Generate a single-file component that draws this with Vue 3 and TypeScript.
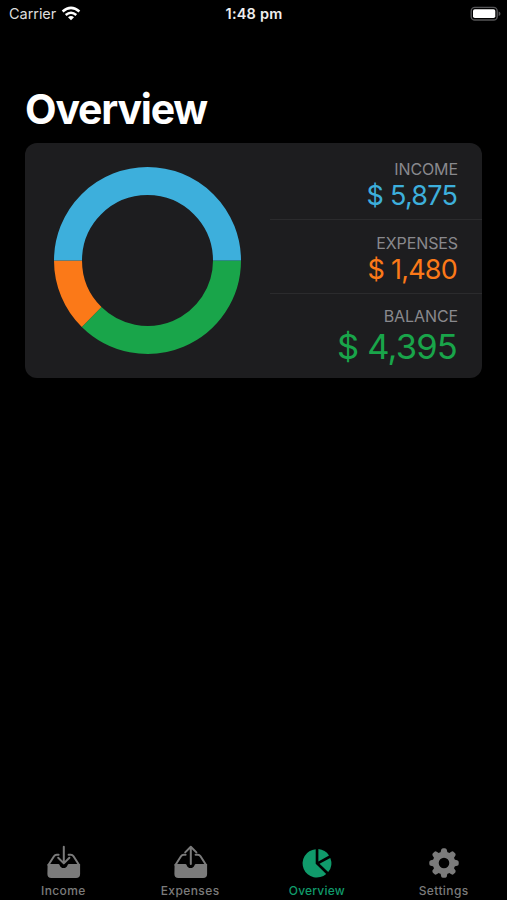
<script setup lang="ts">
import { computed, ref } from 'vue'

type TabId = 'income' | 'expenses' | 'overview' | 'settings'

interface Tab {
  id: TabId
  label: string
}

const income = 5875
const expenses = 1480
const balance = income - expenses

const rows = [
  { id: 'income', label: 'INCOME', amount: income },
  { id: 'expenses', label: 'EXPENSES', amount: expenses },
  { id: 'balance', label: 'BALANCE', amount: balance },
]

const tabs: Tab[] = [
  { id: 'income', label: 'Income' },
  { id: 'expenses', label: 'Expenses' },
  { id: 'overview', label: 'Overview' },
  { id: 'settings', label: 'Settings' },
]

const active = ref<TabId>('overview')
const money = (value: number): string => '$ ' + value.toLocaleString('en-US')

const RADIUS = 79.5

function arc(from: number, to: number): string {
  const point = (deg: number): string => {
    const a = (deg * Math.PI) / 180
    return `${93.5 + RADIUS * Math.cos(a)} ${93.5 + RADIUS * Math.sin(a)}`
  }
  return `M${point(from)}A${RADIUS} ${RADIUS} 0 0 1 ${point(to)}`
}

const segments = computed(() => {
  const split = (balance / (income * 2)) * 360
  return [
    { id: 'balance', d: arc(0, split) },
    { id: 'expenses', d: arc(split, 180) },
    { id: 'income', d: arc(180, 360) },
  ]
})

const teeth = [0, 45, 90, 135, 180, 225, 270, 315]
</script>

<template>
  <div class="screen">
    <header class="status">
      <div class="carrier">
        <span>Carrier</span>
        <svg class="wifi" width="20" height="16" viewBox="0 0 20 16" fill="none" stroke="#fff" stroke-width="2.5">
          <path d="M1.6 5.5Q10-1.8 18.4 5.5M4.7 9Q10 4.5 15.3 9" />
          <path d="M7 11.2Q10 8.9 13 11.2L10 14.2Z" fill="#fff" stroke="none" />
        </svg>
      </div>
      <div class="clock">1:48 pm</div>
      <svg class="battery" width="31" height="16" viewBox="0 0 31 16">
        <rect x="1.2" y="1.4" width="26" height="12.6" rx="3.6" fill="none" stroke="#555557" stroke-width="1.4" />
        <rect x="3" y="3.3" width="22.3" height="8.8" rx="1.8" fill="#fff" />
        <path d="M28.6 5.5Q30.5 6 30.5 7.7T28.6 10Z" fill="#555557" />
      </svg>
    </header>

    <main>
      <h1>Overview</h1>
      <section class="card">
        <svg class="donut" width="188" height="188" viewBox="0 0 188 188">
          <path v-for="s in segments" :key="s.id" :class="s.id" :d="s.d" />
        </svg>
        <div class="summary">
          <div v-for="r in rows" :key="r.id" class="row" :class="r.id">
            <span class="label">{{ r.label }}</span>
            <span class="amount">{{ money(r.amount) }}</span>
          </div>
        </div>
      </section>
    </main>

    <nav class="tabs">
      <button v-for="t in tabs" :key="t.id" class="tab" :class="{ active: active === t.id }" @click="active = t.id">
        <svg width="40" height="38" viewBox="0 0 40 38">
          <g v-if="t.id === 'income' || t.id === 'expenses'" fill="none" stroke="currentColor" stroke-width="2" stroke-linecap="round" stroke-linejoin="round" transform="translate(0.6 0)">
            <path d="M4 21H14.6Q15.8 21 16.1 22.2Q17 25 20 25T23.9 22.2Q24.2 21 25.4 21H36.5V31Q36.5 35 32.5 35H7.8Q3.8 35 3.8 31Z" fill="currentColor" stroke="none" />
            <path d="M4.8 22L10.4 13.2Q11.4 11.7 13.2 11.7H15M35.5 22L29.9 13.2Q28.9 11.7 27.1 11.7H25" />
            <path v-if="t.id === 'income'" d="M20.2 3.8V20M14.6 14.8L20.2 20.4L25.8 14.8" />
            <path v-else d="M20.2 21V4M14.6 9.4L20.2 3.8L25.8 9.4" />
          </g>
          <g v-else-if="t.id === 'overview'" fill="currentColor">
            <path d="M18.7 6.2A14.2 14.2 0 1 0 29.2 31L18.7 20.7Z" />
            <path d="M21.4 6.1A14.2 14.2 0 0 1 32 12.5L21.4 18.5Z" />
            <path d="M33.3 14.9A14.2 14.2 0 0 1 31.2 29.1L22.5 20.8Z" />
          </g>
          <g v-else fill="currentColor" transform="translate(20 20)">
            <path v-for="a in teeth" :key="a" :transform="`rotate(${a})`" d="M-3.8-9L-2.8-13.2Q-2.4-14.7-1-14.7H1Q2.4-14.7 2.8-13.2L3.8-9Z" />
            <circle r="8.3" fill="none" stroke="currentColor" stroke-width="6" />
          </g>
        </svg>
        <span>{{ t.label }}</span>
      </button>
    </nav>
  </div>
</template>

<style>
body {
  background: #000;
}
</style>

<style scoped>
.screen {
  display: flex;
  flex-direction: column;
  height: 900px;
  background: #000;
  color: #fff;
  font-family: Inter, 'Liberation Sans', sans-serif;
}

.status {
  display: grid;
  grid-template-columns: 1fr auto 1fr;
  align-items: center;
  height: 27px;
  padding: 0 6px 0 9px;
  font-size: 14.5px;
}

.carrier {
  display: flex;
  align-items: center;
  gap: 4.5px;
  color: #ddd;
  letter-spacing: -0.05px;
}

.clock {
  font-weight: 600;
  font-size: 14.5px;
  color: #eee;
  padding-right: 2px;
  letter-spacing: 0.2px;
}

.battery {
  justify-self: end;
}

main {
  flex: 1;
  padding: 57px 25px 0;
}

h1 {
  margin: 0;
  height: 59px;
  font-size: 41px;
  line-height: 50px;
  font-weight: 700;
  letter-spacing: -1.2px;
}

.card {
  display: flex;
  height: 235px;
  width: 457px;
  border-radius: 12px;
  background: #1d1d1f;
}

.donut {
  flex: none;
  margin: 24px 28px 0 29px;
}

.donut path {
  fill: none;
  stroke-width: 28px;
  stroke: currentColor;
}

.income {
  color: #3dafdc;
}

.expenses {
  color: #fb7918;
}

.balance {
  color: #19a54a;
}

.summary {
  flex: 1;
  display: flex;
  flex-direction: column;
}

.row {
  display: flex;
  flex-direction: column;
  align-items: flex-end;
  box-sizing: border-box;
  height: 74px;
  padding: 13px 24px 0 0;
}

.row:first-child {
  height: 76px;
  padding-top: 16px;
}

.row + .row {
  border-top: 1px solid #2b2b2d;
}

.label {
  font-size: 16px;
  line-height: 20px;
  letter-spacing: -0.1px;
  color: #89898d;
}

.amount {
  padding-right: 1px;
  font-size: 27px;
  line-height: 33px;
  letter-spacing: -0.8px;
  word-spacing: 0.2px;
}

.row.expenses .amount {
  line-height: 34px;
}

.row.balance .label {
  line-height: 19px;
}

.row.balance .amount {
  font-size: 34.5px;
  line-height: 42px;
  letter-spacing: -0.8px;
  word-spacing: 0;
}

.tabs {
  display: grid;
  grid-template-columns: repeat(4, 1fr);
  height: 57px;
}

.tab {
  display: flex;
  flex-direction: column;
  align-items: center;
  gap: 2px;
  padding: 0;
  border: 0;
  background: none;
  color: #7b7b7b;
  font: 500 12px/16px Inter, 'Liberation Sans', sans-serif;
  letter-spacing: 0.4px;
}

.tab svg {
  flex: none;
}

.tab.active {
  color: #109b6b;
  letter-spacing: 0.2px;
}
</style>
